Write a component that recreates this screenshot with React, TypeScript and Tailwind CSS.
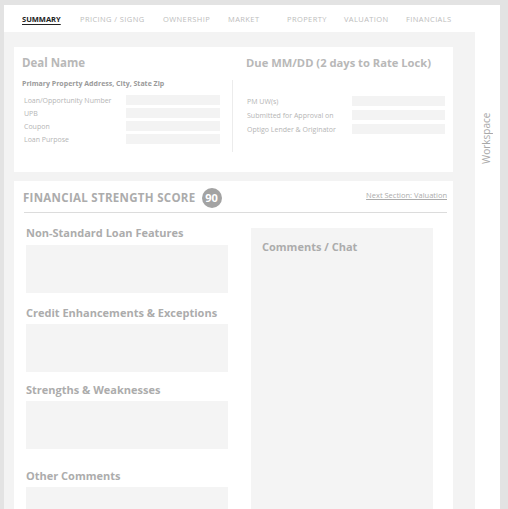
import React from 'react';

const tabs = [
  { label: 'SUMMARY', w: 'w-[58px]' },
  { label: 'PRICING / SIGNG', w: 'w-[83px]' },
  { label: 'OWNERSHIP', w: 'w-[65px]' },
  { label: 'MARKET', w: 'w-[59px]' },
  { label: 'PROPERTY', w: 'w-[57px]' },
  { label: 'VALUATION', w: 'w-[62px]' },
  { label: 'FINANCIALS', w: 'w-[60px]' },
];

const leftRows = ['Loan/Opportunity Number', 'UPB', 'Coupon', 'Loan Purpose'];
const rightRows = ['PM UW(s)', 'Submitted for Approval on', 'Optigo Lender & Originator'];

const sections = [
  { title: 'Non-Standard Loan Features', gap: 'mt-0' },
  { title: 'Credit Enhancements & Exceptions', gap: 'mt-[13px]' },
  { title: 'Strengths & Weaknesses', gap: 'mt-[11px]' },
  { title: 'Other Comments', gap: 'mt-[20px]' },
];

function FieldRow({ label, labelWidth, boxWidth, h }: { label: string; labelWidth: string; boxWidth: string; h: string }) {
  return (
    <div className={`flex items-center ${h}`}>
      <div className={`${labelWidth} text-[7px] text-[#b5b5b5] leading-none whitespace-nowrap`}>{label}</div>
      <div className={`${boxWidth} h-[10px] bg-[#f3f3f3]`} />
    </div>
  );
}

export default function App() {
  return (
    <div
      className="w-[508px] h-[509px] overflow-hidden bg-[#e3e3e3] pl-[4px] pt-[5px] pr-[8px]"
      style={{ fontFamily: '"Open Sans", "Liberation Sans", sans-serif' }}
    >
      {/* Tabs */}
      <div className="h-[27px] bg-white flex items-end pb-[4px] pl-[18px]">
        {tabs.map((t, i) => (
          <div key={t.label} className={`${t.w} shrink-0 whitespace-nowrap`}>
            <span
              className={
                i === 0
                  ? 'text-[7.5px] font-bold text-[#222] underline underline-offset-2'
                  : 'text-[7.5px] text-[#bdbdbd] tracking-[0.4px]'
              }
            >
              {t.label}
            </span>
          </div>
        ))}
      </div>

      <div className="flex h-[480px]">
        {/* Main content */}
        <div className="flex-1 bg-[#f3f3f3] pl-[10px] pr-[22px] pt-[15px]">
          {/* Summary card */}
          <div className="bg-white h-[125px] flex px-[8px] pt-[8px]">
            <div className="w-[210px]">
              <div className="text-[11.5px] font-bold text-[#b8b8b8] leading-[16px]">Deal Name</div>
              <div className="text-[7px] font-bold text-[#9a9a9a] mt-[8px]">Primary Property Address, City, State Zip</div>
              <div className="mt-[4px] pl-[2px]">
                {leftRows.map((r) => (
                  <FieldRow key={r} label={r} labelWidth="w-[102px]" boxWidth="w-[94px]" h="h-[13px]" />
                ))}
              </div>
            </div>
            <div className="w-px bg-[#ececec] mt-[25px] mb-[20px]" />
            <div className="flex-1 pl-[13px]">
              <div className="text-[11.2px] font-bold text-[#b8b8b8] whitespace-nowrap leading-[16px]">
                Due MM/DD (2 days to Rate Lock)
              </div>
              <div className="mt-[23px] pl-[1px]">
                {rightRows.map((r) => (
                  <FieldRow key={r} label={r} labelWidth="w-[105px]" boxWidth="w-[93px]" h="h-[14px]" />
                ))}
              </div>
            </div>
          </div>

          {/* Financial strength card */}
          <div className="bg-white mt-[9px] h-[340px] pl-[9px] pr-[6px] pt-[6px]">
            <div className="flex items-center justify-between h-[22px]">
              <div className="flex items-center">
                <div className="text-[11.5px] font-bold text-[#acacac] tracking-[0.3px]">FINANCIAL STRENGTH SCORE</div>
                <div className="ml-[6px] w-[20px] h-[20px] rounded-full bg-[#a3a3a3] flex items-center justify-center text-white text-[11px] font-bold">
                  90
                </div>
              </div>
              <div className="text-[7.5px] text-[#acacac] underline -mt-[4px]">Next Section: Valuation</div>
            </div>
            <div className="h-px bg-[#dcdcdc] mt-[3px] ml-[1px]" />

            <div className="flex mt-[13px]">
              <div className="w-[202px] ml-[3px]">
                {sections.map((s, i) => (
                  <div key={s.title} className={s.gap}>
                    <div className="text-[11px] font-bold text-[#acacac] leading-[13px] whitespace-nowrap">{s.title}</div>
                    <div className={`h-[48px] bg-[#f4f4f4] ${i === 0 ? 'mt-[6px]' : 'mt-[5px]'}`} />
                  </div>
                ))}
              </div>
              <div className="ml-[23px] w-[182px] bg-[#f4f4f4] h-[300px] mt-[2px] px-[11px] pt-[11px]">
                <div className="text-[11px] font-bold text-[#acacac]">Comments / Chat</div>
              </div>
            </div>
          </div>
        </div>

        {/* Workspace sidebar */}
        <div className="w-[25px] bg-white flex justify-center pt-[80px]">
          <div className="text-[10px] text-[#a8a8a8] [writing-mode:vertical-rl] rotate-180 h-[52px] leading-none -ml-[3px]">
            Workspace
          </div>
        </div>
      </div>
    </div>
  );
}
